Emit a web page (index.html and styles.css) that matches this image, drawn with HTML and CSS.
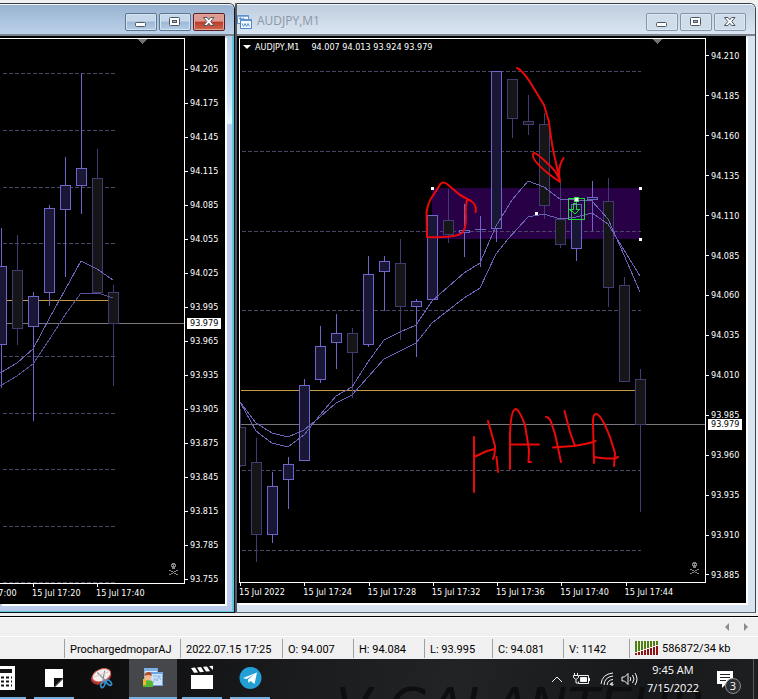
FILE: index.html
```html
<!DOCTYPE html>
<html lang="en">
<head>
<meta charset="utf-8">
<title>AUDJPY,M1</title>
<meta name="viewport" content="width=device-width, initial-scale=1">
<link rel="stylesheet" href="styles.css">
</head>
<body>
<svg class="defs" aria-hidden="true">
  <symbol id="min" viewBox="0 0 12 12"><rect x=".5" y="6.5" width="10" height="4" rx="1" fill="#fff" stroke="#4d5763"/></symbol>
  <symbol id="max" viewBox="0 0 12 12"><rect x=".5" y="1.5" width="10" height="8" rx="1" fill="#fff" stroke="#4d5763"/><rect x="3.5" y="4.5" width="4" height="2" fill="#9fb6d0" stroke="#4d5763"/></symbol>
  <symbol id="close" viewBox="0 0 12 12"><path d="M.5 1.500h3.500l1.800 2.200 1.800-2.200h3.400l-3.300 4 3.300 4h-3.400l-1.800-2.200-1.800 2.200H.5l3.300-4z" fill="#fff" stroke="#4d5763"/></symbol>
  <symbol id="skull" viewBox="0 0 9 12"><path d="M2 1h1V0h3v1h1v3H6v2H3V4H2zM0 7h2v1h2v1h1V8h2V7h2v1H7v1H5v1h2v1h2v1H7v-1H5v-1H4v1H2v1H0v-1h2v-1h2V9H2V8H0z" fill="#858585"/><path d="M3 2h1v1H3zM5 2h1v1H5z" fill="#000"/></symbol>
</svg>

<main class="workspace">
  <section class="window active" aria-label="Chart window">
    <header class="titlebar">
      <div class="controls">
        <button class="ctl" aria-label="Minimize"><svg><use href="#min"/></svg></button>
        <button class="ctl" aria-label="Maximize"><svg><use href="#max"/></svg></button>
        <button class="ctl close" aria-label="Close"><svg><use href="#close"/></svg></button>
      </div>
    </header>
    <div class="client">
      <div class="plot">
        <svg class="chart" viewBox="0 39 184 544" role="img" aria-label="Candlestick chart">
          <path class="grid" d="M3 73.500H115M3 130.500H115M3 187.500H115M3 243.500H115M3 356.500H115M3 413.500H115M3 469.500H115M3 526.500H115M3 582.500H115"/>
          <path class="price" d="M0 323.500H184"/>
          <path class="gold" d="M0 300.500H108"/>
          <path class="bear" d="M17.500 235V345M97.500 149V293M113.500 285V386"/>
          <path class="bull" d="M1.500 228V388M33.500 292V421M49.500 205V306M65.500 157V277M81.500 73V214"/>
          <path class="bear" d="M12.500 270.500h10v58h-10zM92.500 178.500h10v114h-10zM108.500 292.500h10v31h-10z"/>
          <path class="bull" d="M-3.500 266.500h10v78h-10zM28.500 296.500h10v30h-10zM44.500 208.500h10v84h-10zM60.500 185.500h10v24h-10zM76.500 168.500h10v17h-10z"/>
          <path class="ma" d="M0 373 17 363 33 349 49 319 81 261 97 269 113 280"/>
          <path class="ma dim" d="M0 386 17 376 33 364 49 340 65 315 81 293 98 293 113 298"/>
          <path class="marker" d="M138 39h9l-4.500 5z"/>
          <use href="#skull" x="169" y="563" width="9" height="12"/>
        </svg>
      </div>
      <div class="prices left-scale">
        <span>94.205</span><span>94.175</span><span>94.145</span><span>94.115</span><span>94.085</span><span>94.055</span><span>94.025</span><span>93.995</span><span>93.965</span><span>93.935</span><span>93.905</span><span>93.875</span><span>93.845</span><span>93.815</span><span>93.785</span><span>93.755</span>
        <b class="tag">93.979</b>
      </div>
      <div class="times left-times"><span>15 Jul 17:00</span><span>15 Jul 17:20</span><span>15 Jul 17:40</span></div>
    </div>
  </section>

  <section class="window idle" aria-label="AUDJPY,M1">
    <header class="titlebar">
      <svg class="doc" viewBox="0 0 15 15"><path d="M.5 1.500h11v8H.5z" fill="#f4f9ff" stroke="#5f93cf"/><path d="M.5 2h11M2 5l1.500-1 1.500 2 2-2" fill="none" stroke="#5f93cf" stroke-width="1.500"/><path d="M3.500 5.500h11v9h-11z" fill="#f4f9ff" stroke="#4f86c8"/><path d="M3.500 6h11" stroke="#5f93cf" stroke-width="2"/><path d="M5 9.500l1.500 3 1.500-3 1.500 3 1.500-3 1.500 3" fill="none" stroke="#5f93cf"/></svg>
      <h1>AUDJPY,M1</h1>
      <div class="controls">
        <button class="ctl" aria-label="Minimize"><svg><use href="#min"/></svg></button>
        <button class="ctl" aria-label="Maximize"><svg><use href="#max"/></svg></button>
        <button class="ctl" aria-label="Close"><svg><use href="#close"/></svg></button>
      </div>
    </header>
    <div class="client">
      <div class="plot">
        <p class="caption"><i></i><span class="symbol">AUDJPY,M1</span><span>94.007 94.013 93.924 93.979</span></p>
        <svg class="chart" viewBox="240 39 465 543" role="img" aria-label="AUDJPY one minute candlestick chart">
          <path class="zone" d="M432 188h208v51H432z"/>
          <path class="grid" d="M242 71.500H641M242 151.500H641M242 231.500H641M242 310.500H641M242 470.500H641M242 550.500H641"/>
          <path class="price" d="M240 424.500H705"/>
          <path class="gold" d="M241 390.500H635"/>
          <path class="bear" d="M240.500 409V467M256.500 438V562M352.500 328V398M400.500 239V340M448.500 189V243M512.500 79V138M528.500 95V135M544.500 113V219M560.500 182V248M608.500 178V307M624.500 277V381M640.500 369V512"/>
          <path class="bull" d="M272.500 472V543M288.500 457V509M304.500 379V460M320.500 326V383M336.500 314V369M368.500 256V347M384.500 256V311M416.500 299V357M464.500 204V257M480.500 216V267M475 229.500H486M496.500 71V242M576.500 200V261M592.500 181V231"/>
          <path class="bear" d="M235.500 427.500h10v38h-10zM251.500 462.500h10v72h-10zM347.500 333.500h10v19h-10zM395.500 263.500h10v43h-10zM443.500 220.500h10v14h-10zM507.500 79.500h10v39h-10zM523.500 121.500h10v3h-10zM539.500 124.500h10v81h-10zM555.500 219.500h10v25h-10zM603.500 201.500h10v86h-10zM619.500 285.500h10v96h-10zM635.500 379.500h10v45h-10z"/>
          <path class="bull" d="M267.500 486.500h10v48h-10zM283.500 464.500h10v15h-10zM299.500 385.500h10v75h-10zM315.500 346.500h10v33h-10zM331.500 333.500h10v9h-10zM363.500 274.500h10v70h-10zM379.500 261.500h10v10h-10zM411.500 301.500h10v5h-10zM427.500 215.500h10v84h-10zM459.500 230.500h10v2h-10zM491.500 71.500h10v157h-10zM571.500 204.500h10v44h-10zM587.500 197.500h10v2h-10z"/>
          <path class="ma" d="M240 402 256 423 272 433 288 437 304 430 320 417 336 403 352 395 384 359 416 343 432 323 464 298 480 288 496 254 508 239 528 217 544 214 560 219 576 217 592 213 608 224 624 250 640 276"/>
          <path class="ma" d="M240 402 256 431 272 443 288 447 304 435 320 415 336 396 352 387 368 362 384 340 400 332 416 325 432 301 464 273 480 263 496 226 512 200 528 181 544 187 560 199 576 200 592 201 608 219 624 255 640 292"/>
          <path class="handle" d="M431 187h3v3h-3zM639 187h3v3h-3zM639 238h3v3h-3zM535 212h3v3h-3z"/>
          <path class="signal" d="M568.500 198.500h16v21h-16zM573.500 203.500h3v6h3l-4.500 4.500-5-4.500h3.500z"/>
          <path class="signal-dot" d="M574.500 197.500h4v4h-4z"/>
          <path class="pen" d="M427 237L426.500 213Q428 202 432 197L440.500 184Q442.500 181 447 184L460 195 471 201Q477 205 475.500 212M467 200Q465 208 466 217Q466 229 462 233Q455 238 427 237M474 437V492M474 457 487 451 495 449M488 421 495 446Q495 455 493 459M496.500 457 498 472M510 469V433Q511 410 515.500 409Q519 409 525 425L529 450 528.500 462H531M510 444.500H539M546 417Q550 417 552 425L555 434 561 462M564.500 411 570 432 575 446M553 447.500 573 446Q588 444 595.500 441M594 463 593 422Q593 414 596 414Q601 414 610 437L615 453 614 466M594 457Q607 459 615 458.500L618 457M517 68Q521 69 530 82L544 105 549 122Q552 148 556 163L560 182Q531 162 533 154Q534 150 547 163Q556 170 560 181Q557 168 563.500 158"/>
          <path class="marker" d="M653 39h9l-4.500 5z"/>
          <use href="#skull" x="690" y="562" width="9" height="12"/>
        </svg>
      </div>
      <div class="prices right-scale">
        <span>94.210</span><span>94.185</span><span>94.160</span><span>94.135</span><span>94.110</span><span>94.085</span><span>94.060</span><span>94.035</span><span>94.010</span><span>93.985</span><span>93.960</span><span>93.935</span><span>93.910</span><span>93.885</span>
        <b class="tag">93.979</b>
      </div>
      <div class="times"><span>15 Jul 2022</span><span>15 Jul 17:24</span><span>15 Jul 17:28</span><span>15 Jul 17:32</span><span>15 Jul 17:36</span><span>15 Jul 17:40</span><span>15 Jul 17:44</span></div>
    </div>
  </section>
</main>

<div class="tabs">
  <button aria-label="Scroll left"><svg viewBox="0 0 4 8"><path d="M4 0v8L0 4z"/></svg></button>
  <button aria-label="Scroll right"><svg viewBox="0 0 4 8"><path d="M0 0v8l4-4z"/></svg></button>
</div>

<footer class="status">
  <span class="empty"></span><span class="profile">ProchargedmoparAJ</span><span class="date">2022.07.15 17:25</span><span class="quote">O: 94.007</span><span class="quote">H: 94.084</span><span class="low">L: 93.995</span><span class="quote">C: 94.081</span><span class="volume">V: 1142</span>
  <span class="net"><svg viewBox="0 0 24 14"><path d="M1 0v11M4 0v10M7 0v9M10 0v8M13 0v7M16 0v6M19 0v5M22 0v4" stroke="#4f7f12" stroke-width="2"/><path d="M1 12v2M4 11v3M7 10v4M10 9v5M13 8v6M16 7v7M19 6v8M22 5v9" stroke="#8e1414" stroke-width="2"/></svg>586872/34 kb</span>
</footer>

<nav class="taskbar" aria-label="Taskbar">
  <span class="wallpaper" aria-hidden="true">V GALANTEUR</span>
  <button class="task calc" aria-label="Calculator"><svg viewBox="9 0 15 26"><path fill="#fff" d="M0 1h24v24H0z"/><path fill="#141414" d="M3 4h18v4H3z"/><path d="M5 12.500h16M5 16.500h16M5 20.500h16" stroke="#141414" stroke-width="2" stroke-dasharray="3 2"/></svg></button>
  <button class="task" aria-label="Sticky Notes"><svg viewBox="0 0 24 26"><path fill="#fff" d="M3 4h18v9l-9 9H3z"/><path fill="#fff" d="M21 14v8h-8z"/><path fill="#111" d="M12 22v-9h9z"/></svg></button>
  <button class="task idle-task" aria-label="Snipping Tool"><svg viewBox="0 0 26 26"><ellipse cx="12" cy="12" rx="11.500" ry="7.500" transform="rotate(-22 12 12)" fill="#a9342e"/><ellipse cx="12.500" cy="10" rx="10.500" ry="6.500" transform="rotate(-22 12.500 10)" fill="#f6eeee" stroke="#cf5750"/><path d="M8 7l9 9M16 5l-2 10" stroke="#8e9299" stroke-width="1.300"/><path d="M4 12l17-6" stroke="#d5c9c9"/><ellipse cx="14" cy="20" rx="2" ry="3.500" transform="rotate(25 14 20)" fill="none" stroke="#2f91cf" stroke-width="1.800"/><ellipse cx="20.500" cy="18" rx="2" ry="3.500" transform="rotate(-45 20.500 18)" fill="none" stroke="#2f91cf" stroke-width="1.800"/></svg></button>
  <button class="task current" aria-label="Trading terminal"><svg viewBox="0 0 24 26"><path d="M3 3h14v13H3z" fill="#7db0e6"/><path d="M4 6h12v9H4z" fill="#dcebfa"/><path d="M7 7h15v14H7z" fill="#6ea4df"/><path d="M8 9h13v11H8z" fill="#cfe3f8"/><path d="M12 18l2-5 2 3 2-5 2 4M12 11h8" stroke="#8bb7e6" fill="none"/><path d="M2 22v-4q0-3 5-3t5 3v4z" fill="#58b532"/><path d="M2 14h3v6H2z" fill="#f2b92c"/><circle cx="7" cy="12" r="3.500" fill="#f2b98e"/><path d="M3.500 11q0-4 4-4t3 4q-3-2-7 0z" fill="#b14c22"/></svg></button>
  <button class="task" aria-label="Movies"><svg viewBox="0 0 24 26"><path fill="#fff" d="M1 10h22v14H1z"/><path fill="#fff" d="M1 3l4-.4 3 4.800-4 .4zM7 2.400l4-.4 3 4.800-4 .4zM13 1.800l4-.4 3 4.800-4 .4zM19 1.200l4-.4V5z"/></svg></button>
  <button class="task" aria-label="Telegram"><svg viewBox="0 0 24 26"><circle cx="12.500" cy="13" r="11" fill="#239fd5"/><path d="M5 13l14-5.500L16.500 19l-4-3-2 2-.5-3.500 6-5-7.500 4.500z" fill="#fff"/></svg></button>
  <div class="tray">
    <svg class="chevron" viewBox="0 0 12 8"><path d="M1 7l5-5 5 5"/></svg>
    <svg class="battery" viewBox="0 0 18 14"><path d="M6 3.500h9.500v8h-10v-2M16.500 6v3"/><path d="M7.500 5.500h6v4h-6z" fill="#fff"/><path d="M1.500 1v2M4.500 1v2M.5 3.500h5v2L3 7.500.500 5.500zM3 8v3h2"/></svg>
    <svg class="wifi" viewBox="0 0 14 14"><path d="M1 12Q2 2 13 1M4 13Q4.500 5 13 4M7 13Q7.500 8 13 7.500M10 13Q10 11 13 10.500"/><path d="M11 12h2v1h-2z"/></svg>
    <svg class="sound" viewBox="0 0 17 14"><path d="M1 5h2.500L7 1.500v11L3.500 9H1zM9 5q1.500 2 0 4M11.500 3q3 4 0 8M14 1q4 6 0 12"/></svg>
    <time class="clock"><span>9:45 AM</span><span>7/15/2022</span></time>
    <button class="notes" aria-label="Notifications"><svg viewBox="0 0 16 17"><path d="M0 0h16v13H9l-4 4v-4H0z" fill="#fff"/><path d="M3 3.500h10M3 6.500h10M3 9.500h6" stroke="#222"/></svg><b>3</b></button>
  </div>
</nav>
</body>
</html>
```

FILE: styles.css
```css
* { box-sizing: border-box; }

body {
  margin: 0;
  min-height: 100vh;
  display: flex;
  flex-direction: column;
  background: #f0f0f0;
  color: #000;
  font: 11px/16px Roboto, "Liberation Sans", sans-serif;
}

button { padding: 0; border: 0; background: none; color: inherit; font: inherit; }
svg { display: block; }
.defs { position: absolute; width: 0; height: 0; }

/* Chart windows */
.workspace {
  display: grid;
  grid-template-columns: 235fr 521fr;
  padding: 3px 2px 3px 0;
  border-bottom: 1px solid #000;
  box-shadow: 0 1px #fff;
}

.window { display: flex; flex-direction: column; min-width: 0; border-top: 1px solid #333b44; }
.active {
  border-right: 1px solid #10151a;
  border-bottom: 1px solid #10151a;
  border-top-right-radius: 6px;
  box-shadow: inset -2px -1px #5cc8e0;
  background: linear-gradient(#b5cbe6 30px, #c4dff8 90px, #e4f6ff 119px, #b8cbea 121px);
}
.idle {
  border-left: 2px solid #555a60;
  border-right: 1px solid #3e474f;
  border-bottom: 1px solid #5c646c;
  border-top-right-radius: 6px;
  background: #d7e3ee;
}

.titlebar {
  display: flex;
  align-items: center;
  height: 32px;
  padding: 0 9px 0 1px;
  border-top: 1px solid #f4f8fc;
  border-bottom: 2px solid #7b848d;
  border-top-right-radius: 5px;
}
.active .titlebar { background: linear-gradient(#98b3d1, #bcd1e9); }
.idle .titlebar { padding-left: 0; background: linear-gradient(#bfcede, #dae5f1); }
.titlebar h1 { margin: 3px 0 0 5px; color: #8a97a5; font: 12px/16px "Open Sans", sans-serif; }
.doc { width: 15px; height: 15px; margin-top: 3px; }
.controls { display: flex; gap: 2px; margin-left: auto; padding-top: 4px; }
.ctl {
  display: grid;
  place-items: center;
  width: 32px;
  height: 18px;
  border: 1px solid #5f7690;
  border-radius: 2px;
  background: linear-gradient(#c5d7ea 45%, #9db8d6 50%, #b5cde6);
  box-shadow: inset 0 0 0 1px #d4e3f2;
}
.ctl svg { width: 12px; height: 12px; }
.ctl.close { border-color: #5b1f23; background: linear-gradient(#dc9a90 45%, #b93a28 50%, #d0674f); box-shadow: inset 0 0 0 1px #e0a69c; }
.idle .ctl { border-color: #8495aa; background: #cfdce9; box-shadow: inset 0 0 0 1px #dce7f2; }

.client {
  display: grid;
  grid-template-columns: minmax(0, 1fr) 40px;
  padding-top: 2px;
  background: #000;
  color: #fff;
  font-size: 9px;
  line-height: 12px;
  font-family: "DejaVu Sans Condensed", "Noto Sans", sans-serif;
}
.active .client { margin: 0 9px 8px 0; overflow: hidden; box-shadow: 2px 2px #fff; }
.idle .client { margin: 0 9px 9px 0; padding-left: 2px; box-shadow: 1px 1px #fff, 2px 2px #fff; }

.plot { position: relative; border: 1px solid #fff; border-left: 0; }
.idle .plot { border-left: 1px solid #fff; }
.chart { width: 100%; height: auto; shape-rendering: crispEdges; }
.caption { position: absolute; top: 2px; left: 3px; display: flex; gap: 4px; margin: 0; white-space: nowrap; }
.caption i { align-self: center; border: 4px solid transparent; border-top-color: #fff; border-bottom: 0; }
.symbol { padding-right: 8px; }

.grid { stroke: #494566; stroke-dasharray: 4 2; }
.price { stroke: #77777c; }
.gold { stroke: #c49a45; }
.zone { fill: #280046; }
.bull { stroke: #6f66cc; fill: #191636; }
.bear { stroke: #403b70; fill: #161618; }
.ma { fill: none; stroke: #6c63b8; }
.ma.dim { stroke: #57509a; }
.marker { fill: #707070; }
.handle { fill: #fff; }
.signal { fill: none; stroke: #20d83c; }
.signal-dot { fill: #fff; stroke: #42e65a; }
.pen { fill: none; stroke: #ec0909; stroke-width: 2; stroke-linecap: round; stroke-linejoin: round; shape-rendering: auto; }

.prices { position: relative; grid-row: 1 / span 2; grid-column: 2; display: flex; flex-direction: column; margin-top: -2px; padding-bottom: 8px; }
.prices span { flex: 1; display: flex; align-items: center; gap: 2px; }
.prices span::before { content: ""; width: 3px; height: 1px; background: #fff; }
.left-scale { padding-top: 16px; }
.tag { position: absolute; left: 2px; width: 34px; padding-left: 3px; background: #fff; color: #000; font-weight: 400; line-height: 11px; }
.left-scale .tag { top: 282px; }
.right-scale .tag { top: 383px; }

.times { display: flex; height: 20px; overflow: hidden; white-space: nowrap; }
.times span { flex: 0 0 calc(100% * 64 / 465); padding-top: 3px; background: linear-gradient(#fff, #fff) 1px 0 / 1px 3px no-repeat; }
.left-times { margin-left: -32px; }
.left-times span { flex-basis: 64px; }

/* Tab strip and status bar */
.tabs { display: flex; justify-content: flex-end; align-items: center; gap: 15px; height: 19px; padding-right: 10px; }
.tabs svg { width: 4px; height: 8px; fill: #8c8c8c; }
.status { display: flex; align-items: center; height: 23px; border-top: 1px solid #fff; white-space: nowrap; }
.status > span { height: 19px; padding-left: 5px; border-left: 1px solid #a0a0a0; line-height: 21px; }
.status .empty { width: 64px; border: 0; }
.profile { width: 116px; }
.date { width: 102px; }
.quote { width: 71px; }
.low { width: 68px; }
.volume { width: 66px; }
.net { flex: 1; display: flex; align-items: center; gap: 3px; }
.net svg { width: 24px; height: 14px; }

/* Taskbar */
.taskbar {
  position: relative;
  flex: 1;
  display: flex;
  min-height: 40px;
  overflow: hidden;
  background: linear-gradient(100deg, #0c0c0d 10%, #1b1c1e 40%, #222325 60%, #17181a 85%, #1e1f21);
  color: #fff;
}
.wallpaper { position: absolute; left: 336px; top: 22px; color: #0e0e10; font: italic 52px/52px "DejaVu Sans", sans-serif; white-space: nowrap; }
.task { position: relative; display: grid; place-items: center; width: 40px; margin-right: 8px; border-bottom: 2px solid #76b0de; }
.task svg { width: 24px; height: 26px; }
.task.calc { width: 26px; justify-items: start; }
.task.calc svg { width: 15px; }
.idle-task { border-color: transparent; margin-right: 7px; }
.task.current { width: 48px; margin-right: 5px; background: #46474a; }
.tray { position: relative; display: flex; align-items: center; margin: 0 4px 0 auto; padding-right: 20px; border-right: 1px solid #55565a; }
.tray svg { fill: none; stroke: #f2f2f2; }
.chevron { width: 12px; height: 8px; margin-right: 10px; }
.battery { width: 18px; height: 14px; margin-right: 9px; }
.wifi { width: 14px; height: 14px; margin-right: 7px; }
.sound { width: 17px; height: 14px; margin-right: 9px; }
.clock { display: flex; flex-direction: column; align-items: center; margin-right: 18px; font: 11px/18px "Open Sans", sans-serif; }
.notes { position: relative; }
.notes svg { width: 16px; height: 17px; stroke: none; }
.notes b {
  position: absolute;
  left: 8px;
  top: 7px;
  width: 16px;
  height: 16px;
  border: 1px solid #8b8c8f;
  border-radius: 50%;
  background: #2d2e31;
  font: 11px/14px "Open Sans", sans-serif;
  text-align: center;
}
```
